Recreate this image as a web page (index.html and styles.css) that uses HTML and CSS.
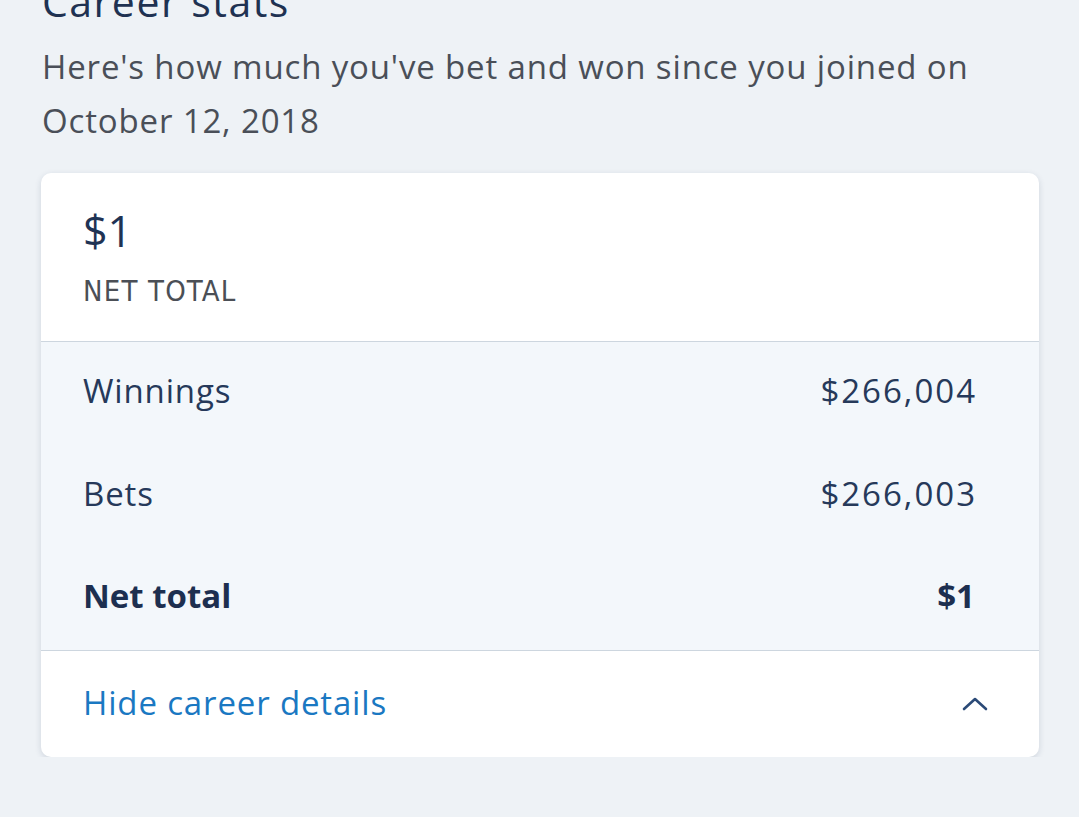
FILE: index.html
```html
<!DOCTYPE html>
<html>
<head>
  <title>Career stats</title>
  <meta name="viewport" content="width=device-width, initial-scale=1.0">
  <link rel="stylesheet" href="styles.css">
</head>
<body>
  <div class="page">
    <h2 class="title">Career stats</h2>
    <p class="intro">Here's how much you've bet and won since you joined on October 12, 2018</p>

    <div class="stats-card">
      <div class="stats-head">
        <div class="big-amount">$1</div>
        <div class="big-label">NET TOTAL</div>
      </div>

      <div class="stats-rows">
        <div class="stats-row">
          <span>Winnings</span>
          <span class="amount">$266,004</span>
        </div>
        <div class="stats-row">
          <span>Bets</span>
          <span class="amount">$266,003</span>
        </div>
        <div class="stats-row total">
          <span>Net total</span>
          <span class="amount">$1</span>
        </div>
      </div>

      <div class="stats-foot">
        <a class="toggle-link" href="#">Hide career details</a>
        <svg class="chevron" width="26" height="16" viewBox="0 0 26 16">
          <path d="M2 13 L13 3 L24 13" fill="none" stroke="#2b4a77" stroke-width="2.6" stroke-linecap="round" stroke-linejoin="round"/>
        </svg>
      </div>
    </div>
  </div>
</body>
</html>
```

FILE: styles.css
```css
body {
  margin: 0;
  font-family: "Open Sans", Lato, sans-serif;
  background-color: #eef2f6;
  overflow: hidden;
}

.page {
  padding: 0 40px 0 41px;
}

.title {
  margin: -26px 0 0 1px;
  font-size: 41px;
  font-weight: 400;
  letter-spacing: 1.5px;
  line-height: 54px;
  color: #1f3252;
}

.intro {
  margin: 12px 0 25px 1px;
  font-size: 33px;
  letter-spacing: 0.85px;
  line-height: 54px;
  color: #4a4f58;
}

.stats-card {
  background-color: #fff;
  border-radius: 10px;
  box-shadow: 0 2px 6px rgba(30, 50, 80, 0.15);
  overflow: hidden;
}

.stats-head {
  height: 169px;
  padding: 0 42px;
  box-sizing: border-box;
  border-bottom: 1px solid #cdd6df;
}

.big-amount {
  padding-top: 28px;
  font-size: 43px;
  line-height: 60px;
  color: #1f3354;
}

.big-label {
  margin-top: 10px;
  font-family: "Liberation Sans Narrow", "DejaVu Sans Condensed", sans-serif;
  font-size: 29px;
  letter-spacing: 1.2px;
  line-height: 40px;
  color: #4b4f56;
}

.stats-rows {
  background-color: #f3f7fb;
  border-bottom: 1px solid #cdd6df;
  padding: 0 64px 0 42px;
}

.stats-row {
  display: flex;
  justify-content: space-between;
  align-items: center;
  height: 102.7px;
  padding-bottom: 6px;
  box-sizing: border-box;
  font-size: 33px;
  letter-spacing: 0.85px;
  color: #26395a;
}

.stats-row .amount {
  letter-spacing: 2px;
  margin-right: -2px;
}

.stats-row.total {
  font-weight: 700;
  letter-spacing: 0;
  color: #1d2f50;
}

.stats-row.total .amount {
  letter-spacing: 0;
  margin-right: 0;
}

.stats-foot {
  display: flex;
  justify-content: space-between;
  align-items: center;
  height: 106px;
  padding: 0 51px 4px 42px;
  box-sizing: border-box;
}

.toggle-link {
  font-size: 33px;
  letter-spacing: 0.85px;
  color: #1a78c2;
  text-decoration: none;
}

.chevron {
  margin-top: 4px;
}
```
